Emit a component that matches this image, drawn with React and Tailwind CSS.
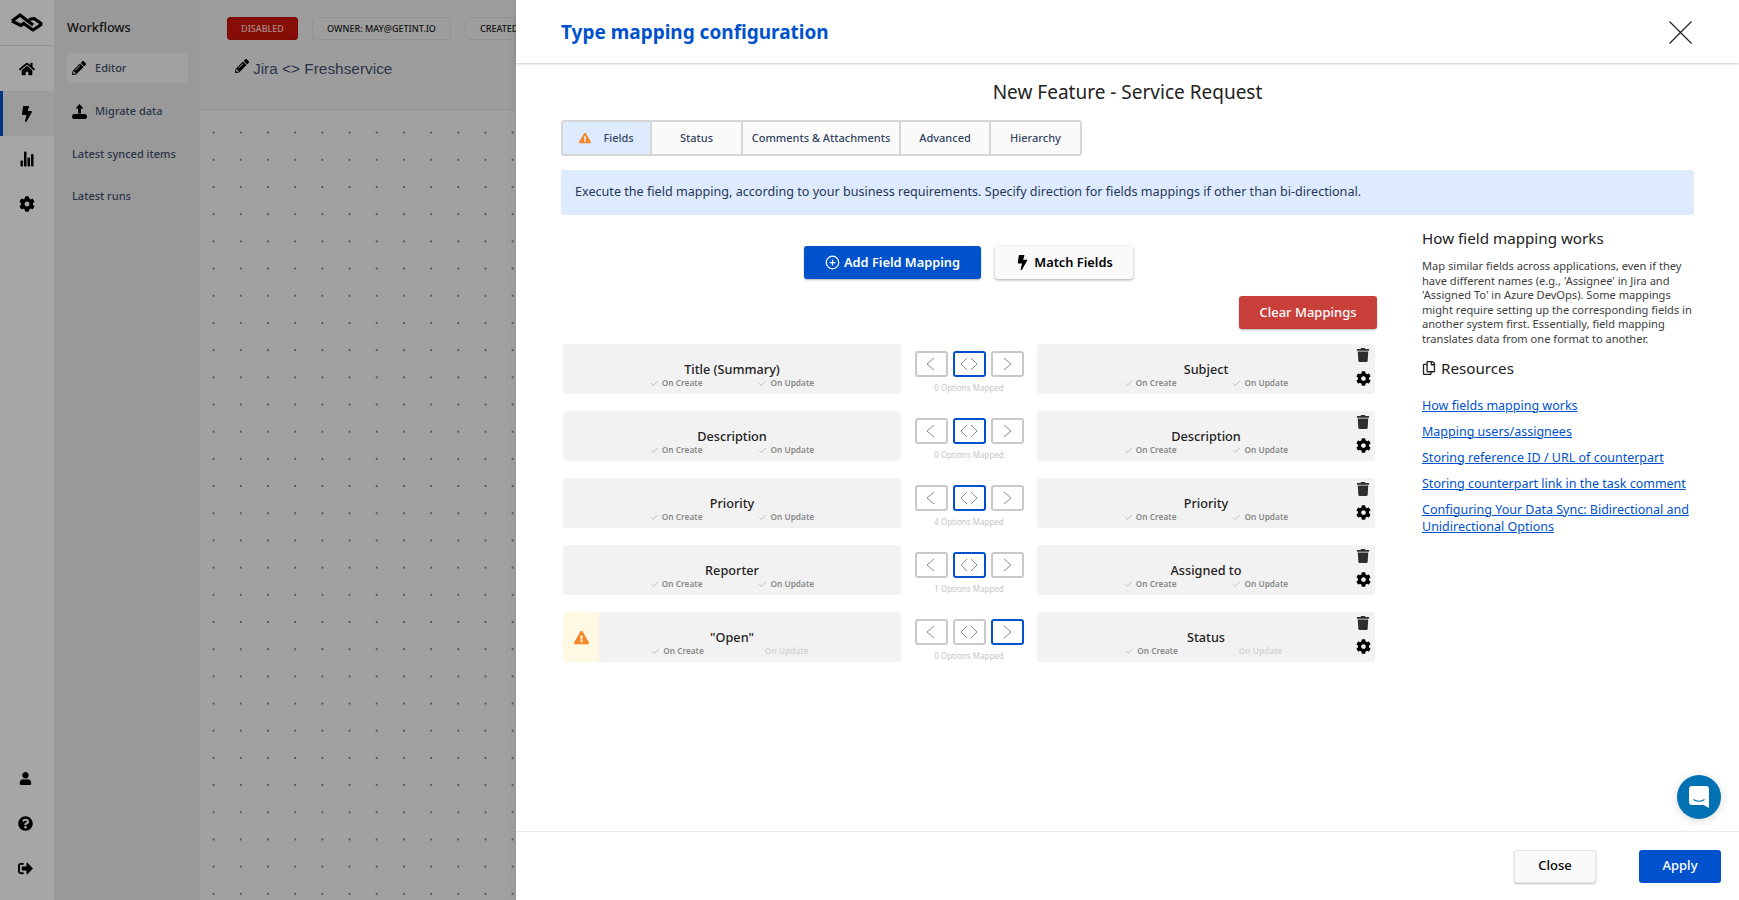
import {
  FaHome,
  FaBolt,
  FaCog,
  FaPencilAlt,
  FaTrash,
  FaUser,
  FaQuestionCircle,
  FaSignOutAlt,
  FaExclamationTriangle,
  FaRegCopy,
} from "react-icons/fa";
import { IoStatsChart } from "react-icons/io5";
import { FiPlusCircle } from "react-icons/fi";
import { Check } from "lucide-react";

const rows = [
  { left: "Title (Summary)", right: "Subject", options: 0 },
  { left: "Description", right: "Description", options: 0 },
  { left: "Priority", right: "Priority", options: 4 },
  { left: "Reporter", right: "Assigned to", options: 1 },
  { left: '"Open"', right: "Status", options: 0, warning: true },
];

const tabs = [
  { label: "Fields", w: "w-[89px]", active: true },
  { label: "Status", w: "w-[91px]" },
  { label: "Comments & Attachments", w: "w-[158px]" },
  { label: "Advanced", w: "w-[90px]" },
  { label: "Hierarchy", w: "w-[89px]" },
];

const links = [
  "How fields mapping works",
  "Mapping users/assignees",
  "Storing reference ID / URL of counterpart",
  "Storing counterpart link in the task comment",
  "Configuring Your Data Sync: Bidirectional and Unidirectional Options",
];

const Logo = () => (
  <svg width="32" height="20" viewBox="0 0 32 20" fill="none" stroke="#000" strokeWidth="3.2" strokeLinejoin="round">
    <path d="M1 8 L9 2 L22 12" />
    <path d="M1 8 L10 12.5 L14 9.5" />
    <path d="M18 6.5 L23 5.5 L31 11" />
    <path d="M31 11 L22 17 L12 10" />
  </svg>
);

const UploadIcon = () => (
  <svg width="15" height="15" viewBox="0 0 15 15" fill="#000">
    <path d="M7.5 0 L11.5 4.5 H9 V9.5 H6 V4.5 H3.5 Z" />
    <rect x="0" y="10" width="15" height="5" rx="2.5" />
  </svg>
);

const Chevron = ({ dir }) => (
  <svg width="26" height="16" viewBox="0 0 26 16" fill="none" stroke="#8c8c8c" strokeWidth="1">
    {dir !== "right" && <path d={dir === "both" ? "M11 2 L5 8 L11 14" : "M16 2 L9 8 L16 14"} />}
    {dir !== "left" && <path d={dir === "both" ? "M15 2 L21 8 L15 14" : "M10 2 L17 8 L10 14"} />}
  </svg>
);

const DirButton = ({ dir, active }) => (
  <div
    className={`w-[33px] h-[26px] flex items-center justify-center rounded-[3px] border-2 bg-white ${
      active ? "border-[#0052cc]" : "border-[#c9c9c9]"
    }`}
  >
    <Chevron dir={dir} />
  </div>
);

const SyncFlag = ({ label, off }) => (
  <span
    className={`flex items-center gap-[3px] text-[8.3px] leading-[12px] font-semibold ${
      off ? "text-[#d4d4d4] w-[53px] pl-[5px] font-normal" : "text-[#8a8a8a]"
    }`}
  >
    {!off && <Check size={9} strokeWidth={1.5} className="text-[#999]" />}
    {label}
  </span>
);

const FieldCard = ({ title, warning, action }) => (
  <div className="relative w-[338px] h-[50px] bg-[#f2f2f2] rounded-[3px] overflow-hidden flex flex-col items-center pt-[15px]">
    {warning && (
      <div className="absolute left-0 top-0 bottom-0 w-[36px] bg-[#fff8e3] flex items-center justify-center">
        <FaExclamationTriangle size={15} className="text-[#f5872a]" />
      </div>
    )}
    <div className="text-[12.7px] leading-[20px] font-medium text-[#222]">{title}</div>
    <div className="flex gap-[56px] -mt-[2px]">
      <SyncFlag label="On Create" />
      <SyncFlag label="On Update" off={action} />
    </div>
  </div>
);

const MappingRow = ({ row }) => (
  <div className="flex items-start h-[50px] mb-[17px]">
    <FieldCard title={row.left} warning={row.warning} action={row.warning} />
    <div className="w-[109px] mx-[13.5px] pt-[7px]">
      <div className="flex justify-between">
        <DirButton dir="left" />
        <DirButton dir="both" active={!row.warning} />
        <DirButton dir="right" active={row.warning} />
      </div>
      <div className="text-[8px] leading-[12px] text-center text-[#c6c6c6] mt-[5px]">
        {row.options} Options Mapped
      </div>
    </div>
    <div className="relative">
      <FieldCard title={row.right} action={row.warning} />
      <FaTrash size={14} className="absolute right-[5px] top-[4px] text-[#2e2e2e]" />
      <FaCog size={15} className="absolute right-[4px] top-[27px] text-black" />
    </div>
  </div>
);

const Background = () => (
  <div className="absolute inset-0 flex">
    <aside className="w-[54px] bg-white flex flex-col shrink-0">
      <div className="h-[46px] flex items-center justify-center border-b border-[#ddd]">
        <Logo />
      </div>
      <div className="h-[45px] flex items-center justify-center">
        <FaHome size={16} />
      </div>
      <div className="h-[45px] flex items-center justify-center bg-[#f0f0f0] border-l-[3px] border-[#0052cc] pr-[3px]">
        <FaBolt size={16} />
      </div>
      <div className="h-[45px] flex items-center justify-center">
        <IoStatsChart size={16} />
      </div>
      <div className="h-[45px] flex items-center justify-center">
        <FaCog size={16} />
      </div>
      <div className="mt-auto pb-[9px] flex flex-col items-center pr-[4px]">
        <div className="h-[45px] flex items-center">
          <FaUser size={13} />
        </div>
        <div className="h-[45px] flex items-center">
          <FaQuestionCircle size={15} />
        </div>
        <div className="h-[45px] flex items-center">
          <FaSignOutAlt size={15} />
        </div>
      </div>
    </aside>
    <nav className="w-[146px] bg-[#ebebeb] pl-[13px] pr-[12px] pt-[17px] shrink-0 text-[11px] font-medium text-[#42526e]">
      <div className="text-[12.7px] leading-[20px] font-medium text-[#222]">Workflows</div>
      <div className="mt-[16px] h-[30px] rounded-[3px] bg-[#f7f7f7] flex items-center pl-[5px] gap-[9px]">
        <FaPencilAlt size={14} className="text-black" />
        Editor
      </div>
      <div className="mt-[14px] h-[29px] flex items-center pl-[5px] gap-[8px]">
        <UploadIcon />
        Migrate data
      </div>
      <div className="mt-[13.5px] h-[29px] flex items-center pl-[5px]">Latest synced items</div>
      <div className="mt-[13.5px] h-[29px] flex items-center pl-[5px]">Latest runs</div>
    </nav>
    <main className="flex-1 flex flex-col bg-[#f7f7f7]">
      <div className="h-[110px] border-b border-[#e2e2e2] pl-[27px] pt-[17px] bg-[#f2f2f2]">
        <div className="flex gap-[14px] text-[9px] font-medium">
          <span className="h-[23px] w-[71px] flex items-center justify-center rounded-[3px] bg-[#d0160c] text-[#ffd0d0] border border-[#b80f06]">
            DISABLED
          </span>
          <span className="h-[23px] w-[139px] flex items-center justify-center rounded-[3px] border border-[#e3e3e3] text-[#222]">
            OWNER: MAY@GETINT.IO
          </span>
          <span className="h-[23px] w-[139px] flex items-center pl-[14px] rounded-[3px] border border-[#e3e3e3] text-[#222]">
            CREATED
          </span>
        </div>
        <div className="mt-[17px] ml-[8px] flex items-center gap-[4px] font-['Liberation_Sans',sans-serif] text-[15.4px] text-[#42526e]">
          <FaPencilAlt size={14} className="text-black -mt-[6px]" />
          Jira &lt;&gt; Freshservice
        </div>
      </div>
      <div className="flex-1 bg-[radial-gradient(#8a8a8a_0.8px,transparent_1px)] bg-[size:27.2px_27.2px] bg-[position:0_9px]" />
    </main>
  </div>
);

const App = () => {
  return (
    <div className="relative h-screen overflow-hidden font-['Noto_Sans',sans-serif] text-black">
      <Background />
      <div className="absolute inset-0 bg-black/35" />
      {/* modal panel */}
      <div className="absolute right-0 top-0 bottom-0 w-[1223px] bg-white flex flex-col shadow-lg">
        <header className="h-[63px] shrink-0 pl-[45px] pr-[47px] pt-[1px] flex items-center justify-between shadow-[0_1px_2px_rgba(0,0,0,0.2)]">
          <h1 className="text-[19px] font-bold text-[#0052cc]">Type mapping configuration</h1>
          <svg width="23" height="23" viewBox="0 0 23 23" stroke="#222" strokeWidth="1.2">
            <path d="M0.5 0.5 L22.5 22.5 M22.5 0.5 L0.5 22.5" />
          </svg>
        </header>
        <div className="flex-1 pl-[45px] pr-[45px] min-h-0">
          <h2 className="text-[19px] leading-[26px] text-center text-[#222] mt-[16px]">
            New Feature - Service Request
          </h2>
          <div className="mt-[15px] flex w-fit h-[36px] border-2 border-[#d6d6d6] rounded-[3px] text-[11px] font-medium text-[#344563] bg-[#fafafa]">
            {tabs.map((tab) => (
              <div
                key={tab.label}
                className={`${tab.w} flex items-center justify-center gap-[12px] border-r-2 border-[#d6d6d6] last:border-r-0 ${
                  tab.active ? "bg-[#deebff]" : ""
                }`}
              >
                {tab.active && <FaExclamationTriangle size={12} className="text-[#f5872a]" />}
                {tab.label}
              </div>
            ))}
          </div>
          <div className="mt-[14px] h-[45px] rounded-[3px] bg-[#deebff] pl-[14px] flex items-center text-[12.6px] text-[#253858]">
            Execute the field mapping, according to your business requirements. Specify direction for fields mappings if other than bi-directional.
          </div>
          <div className="flex mt-[17px]">
            <div className="w-[815px] pl-[2px] pt-[14px] shrink-0">
              <div className="h-[33px] flex justify-center gap-[14px] pr-[2px]">
                <button className="w-[177px] rounded-[3px] bg-[#0052cc] text-white text-[12.8px] font-semibold flex items-center justify-center gap-[4px] shadow-[0_1px_2px_rgba(0,0,0,0.3)]">
                  <FiPlusCircle size={15} />
                  Add Field Mapping
                </button>
                <button className="w-[138px] rounded-[3px] bg-[#fafafa] text-black text-[12.8px] font-semibold flex items-center justify-center gap-[4px] shadow-[0_1px_3px_rgba(0,0,0,0.35)]">
                  <FaBolt size={15} />
                  Match Fields
                </button>
              </div>
              <div className="mt-[17px] flex justify-end -mr-[1px]">
                <button className="w-[138px] h-[33px] rounded-[3px] bg-[#c9403b] text-white text-[13px] font-medium shadow-[0_1px_2px_rgba(0,0,0,0.3)]">
                  Clear Mappings
                </button>
              </div>
              <div className="mt-[15px]">
                {rows.map((row) => (
                  <MappingRow key={row.left} row={row} />
                ))}
              </div>
            </div>
            <aside className="ml-[46px] w-[272px] shrink-0">
              <h3 className="text-[15.2px] leading-[24px] text-[#222] -mt-[6px]">How field mapping works</h3>
              <p className="mt-[9px] text-[11.1px] leading-[14.6px] text-[#3d3d3d] w-[272px]">
                Map similar fields across applications, even if they have different names (e.g., 'Assignee' in Jira and 'Assigned To' in Azure DevOps). Some mappings might require setting up the corresponding fields in another system first. Essentially, field mapping translates data from one format to another.
              </p>
              <h3 className="mt-[9px] flex items-center gap-[5px] text-[15.2px] leading-[24px] text-[#222]">
                <FaRegCopy size={14} />
                Resources
              </h3>
              <div className="mt-[17px] text-[12.5px] leading-[17px] text-[#0052cc] flex flex-col gap-[9px]">
                {links.map((link) => (
                  <a key={link} className="underline">
                    {link}
                  </a>
                ))}
              </div>
            </aside>
          </div>
        </div>
        <footer className="h-[69px] shrink-0 border-t border-[#ececec] pr-[18px] flex items-center justify-end gap-[43px]">
          <button className="w-[82px] h-[33px] rounded-[3px] bg-[#fafafa] text-black text-[13px] font-medium border border-[#e5e5e5] shadow-[0_1px_2px_rgba(0,0,0,0.25)]">
            Close
          </button>
          <button className="w-[82px] h-[33px] rounded-[3px] bg-[#0052cc] text-white text-[13px] font-medium">
            Apply
          </button>
        </footer>
      </div>
      {/* chat launcher */}
      <div className="absolute left-[1677px] top-[775px] w-[44px] h-[44px] rounded-full bg-[#0071b2] flex items-center justify-center shadow-[0_2px_10px_rgba(0,0,0,0.15)]">
        <svg width="20" height="22" viewBox="0 0 20 22">
          <path d="M3 0 H17 A3 3 0 0 1 20 3 V22 L14.5 19 H3 A3 3 0 0 1 0 16 V3 A3 3 0 0 1 3 0 Z" fill="#fff" />
          <path d="M4.5 13.5 Q10 17 15.5 13.5" stroke="#0071b2" strokeWidth="1.2" fill="none" />
        </svg>
      </div>
    </div>
  );
};

export default App;
